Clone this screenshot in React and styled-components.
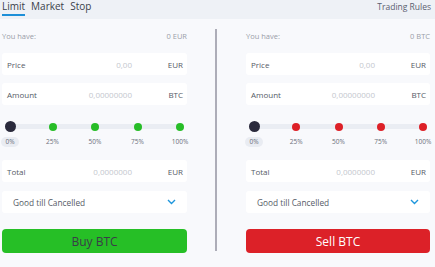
import styled, { createGlobalStyle } from "styled-components";

const GlobalStyle = createGlobalStyle`
  html, body {
    margin: 0;
    padding: 0;
    background: #f8f9fc;
    font-family: "Open Sans", "Liberation Sans", sans-serif;
  }
`;

const marks = [0, 25, 50, 75, 100];

const sides = [
  { key: "buy", balance: "0 EUR", dot: "#27bd27", button: "Buy BTC" },
  { key: "sell", balance: "0 BTC", dot: "#dd2027", button: "Sell BTC" },
];

const Page = styled.div`
  width: 435px;
  height: 267px;
  background: #f8f9fc;
  overflow: hidden;
`;

const Header = styled.div`
  height: 19px;
  background: #eef1f6;
  display: flex;
  align-items: flex-start;
  justify-content: space-between;
  padding: 0 4px 0 2px;
`;

const Tabs = styled.div`
  display: flex;
  gap: 6px;
`;

const Tab = styled.div`
  font-size: 10px;
  line-height: 13px;
  color: #3a3f4a;
  height: 14px;
  border-bottom: 2px solid ${(p) => (p.$active ? "#1d8fd8" : "transparent")};
`;

const Rules = styled.div`
  font-size: 8.5px;
  line-height: 13px;
  color: #5a6070;
`;

const Body = styled.div`
  display: grid;
  grid-template-columns: 185px 2px 185px;
  column-gap: 28px;
  padding: 10px 0 0 2px;
`;

const Divider = styled.div`
  width: 2px;
  height: 222px;
  background: #adadb8;
`;

const Column = styled.div`
  display: flex;
  flex-direction: column;
  margin-left: ${(p) => (p.$shift ? "1px" : "0")};
`;

const Balance = styled.div`
  height: 14px;
  display: flex;
  justify-content: space-between;
  align-items: center;
  font-size: 7.5px;
  color: #9a9ea8;
  margin-bottom: 10px;
`;

const Field = styled.div`
  height: 22px;
  background: #ffffff;
  border-radius: 3px;
  display: flex;
  align-items: center;
  padding: 0 4px 0 5px;
  font-size: 8px;
  color: #555a66;
  margin-bottom: ${(p) => p.$gap || 0}px;
`;

const Label = styled.span`
  flex: 1;
`;

const Value = styled.span`
  color: #c4c7ce;
  width: 90px;
  text-align: right;
`;

const Unit = styled.span`
  width: 51px;
  text-align: right;
`;

const Slider = styled.div`
  height: 55px;
  position: relative;
  padding: 16px 7px 0 8px;
  box-sizing: border-box;
  &::before {
    content: "";
    position: absolute;
    left: 8px;
    right: 7px;
    top: 19px;
    height: 5px;
    background: #eaedf3;
  }
`;

const Marks = styled.div`
  position: relative;
  display: flex;
  justify-content: space-between;
`;

const Mark = styled.div`
  width: 0;
  display: flex;
  flex-direction: column;
  align-items: center;
`;

const DotBox = styled.div`
  height: 11px;
  display: flex;
  align-items: center;
  justify-content: center;
`;

const Dot = styled.div`
  flex-shrink: 0;
  width: ${(p) => (p.$thumb ? 11 : 8)}px;
  height: ${(p) => (p.$thumb ? 11 : 8)}px;
  border-radius: 50%;
  background: ${(p) => (p.$thumb ? "#2a2a3c" : p.$color)};
`;

const MarkLabel = styled.div`
  margin-top: 5px;
  font-size: 6.5px;
  line-height: 10px;
  white-space: nowrap;
  color: #6a6f7a;
  padding: 0 4px;
  border-radius: 5px;
  background: ${(p) => (p.$pill ? "#e9ecf2" : "transparent")};
`;

const Select = styled(Field)`
  padding: 0 11px 0 11px;
  justify-content: space-between;
  font-size: 8.3px;
`;

const Button = styled.button`
  margin-top: 16px;
  height: 24px;
  border: none;
  border-radius: 4px;
  font-family: inherit;
  font-size: 12px;
  background: ${(p) => (p.$sell ? "#dc2128" : "#26bf26")};
  color: ${(p) => (p.$sell ? "#ffffff" : "#3a3d48")};
  padding: 0;
`;

const Chevron = () => (
  <svg width="9" height="6" viewBox="0 0 9 6">
    <path d="M1 1 L4.5 4.5 L8 1" fill="none" stroke="#1e96dc" strokeWidth="1.4" />
  </svg>
);

const OrderForm = ({ side, shift }) => (
  <Column $shift={shift}>
    <Balance>
      <span>You have:</span>
      <span>{side.balance}</span>
    </Balance>
    <Field $gap={8}>
      <Label>Price</Label>
      <Value>0,00</Value>
      <Unit>EUR</Unit>
    </Field>
    <Field>
      <Label>Amount</Label>
      <Value>0,00000000</Value>
      <Unit>BTC</Unit>
    </Field>
    <Slider>
      <Marks>
        {marks.map((m) => (
          <Mark key={m}>
            <DotBox>
              <Dot $thumb={m === 0} $color={side.dot} />
            </DotBox>
            <MarkLabel $pill={m === 0}>{m}%</MarkLabel>
          </Mark>
        ))}
      </Marks>
    </Slider>
    <Field $gap={9}>
      <Label>Total</Label>
      <Value>0,0000000</Value>
      <Unit>EUR</Unit>
    </Field>
    <Select>
      <span>Good till Cancelled</span>
      <Chevron />
    </Select>
    <Button $sell={side.key === "sell"}>{side.button}</Button>
  </Column>
);

export default function App() {
  return (
    <Page>
      <GlobalStyle />
      <Header>
        <Tabs>
          <Tab $active>Limit</Tab>
          <Tab>Market</Tab>
          <Tab>Stop</Tab>
        </Tabs>
        <Rules>Trading Rules</Rules>
      </Header>
      <Body>
        <OrderForm side={sides[0]} />
        <Divider />
        <OrderForm side={sides[1]} shift />
      </Body>
    </Page>
  );
}
